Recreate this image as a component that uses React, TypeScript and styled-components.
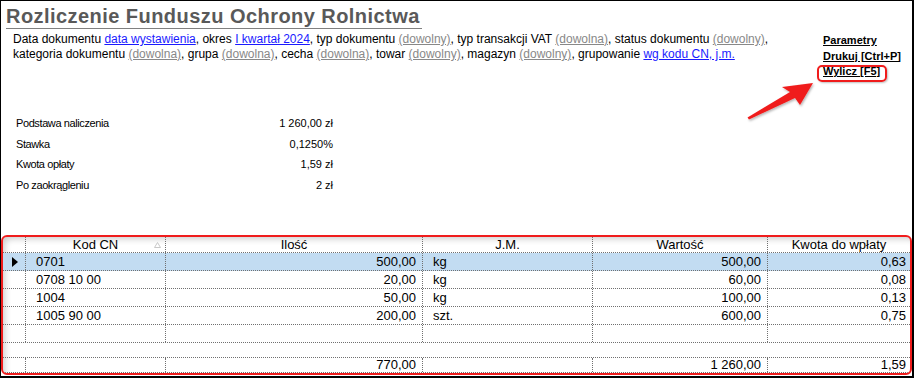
import { Fragment } from "react";
import styled, { createGlobalStyle } from "styled-components";

const GlobalStyle = createGlobalStyle`
  html, body {
    margin: 0;
    padding: 0;
    background: #fff;
  }
  body {
    font-family: "Liberation Sans", Arial, sans-serif;
    color: #000;
  }
`;

const Frame = styled.div`
  position: relative;
  box-sizing: border-box;
  width: 914px;
  height: 378px;
  border-top: 1px solid #000;
  border-left: 1px solid #000;
  border-right: 2px solid #000;
  border-bottom: 2px solid #000;
  display: flex;
  flex-direction: column;
  background: #fff;
`;

const Top = styled.div`
  display: grid;
  grid-template-columns: 1fr 89px;
  height: 112px;
`;

const Intro = styled.div`
  display: flex;
  flex-direction: column;
  align-items: flex-start;
`;

const Title = styled.h1`
  margin: 4px 0 0 5px;
  font-size: 20px;
  line-height: 23px;
  letter-spacing: 0.45px;
  font-weight: bold;
  color: #595959;
  border-bottom: 1px solid #808080;
  padding-right: 2px;
`;

const Description = styled.p`
  margin: 3px 0 0;
  padding-left: 12px;
  font-size: 12px;
  line-height: 15px;
  white-space: nowrap;
`;

interface ParamProps {
  $free?: boolean;
}

const Param = styled.span<ParamProps>`
  color: ${(p) => (p.$free ? "#888" : "#1a1aff")};
  text-decoration: underline;
  cursor: pointer;
`;

const Actions = styled.div`
  padding-top: 32px;
  display: flex;
  flex-direction: column;
  align-items: flex-start;
`;

interface ActionProps {
  $marked?: boolean;
}

const Action = styled.a<ActionProps>`
  position: relative;
  display: inline-block;
  font-size: 11px;
  line-height: 15.5px;
  font-weight: bold;
  color: #000;
  text-decoration: underline;
  cursor: pointer;

  ${(p) =>
    p.$marked &&
    `
    &::after {
      content: "";
      position: absolute;
      left: -6px;
      top: 1px;
      width: 70px;
      height: 17px;
      box-sizing: border-box;
      border: 2px solid #f01c1c;
      border-radius: 5px;
      box-shadow: 1px 1px 2px rgba(0, 0, 0, 0.25);
    }
  `}
`;

const Arrow = styled.svg`
  position: absolute;
  left: 739px;
  top: 75px;
  overflow: visible;
`;

const Summary = styled.div`
  display: grid;
  grid-template-columns: 1fr auto;
  grid-auto-rows: 20.5px;
  width: 317px;
  margin-left: 15px;
  font-size: 11px;
  line-height: 20.5px;
  letter-spacing: -0.4px;
`;

const SummaryValue = styled.span`
  text-align: right;
  letter-spacing: 0;
`;

const Spacer = styled.div`
  flex: 1;
`;

const Panel = styled.div`
  margin-bottom: 1px;
  height: 140px;
  box-sizing: border-box;
  border: 2px solid #f01c1c;
  border-radius: 6px;
  box-shadow: inset 4px 4px 6px -2px rgba(0, 0, 0, 0.2);
  overflow: hidden;
  font-size: 13px;
`;

const columns = "23px 140px 257px 170px 175px 1fr";

interface RowProps {
  $selected?: boolean;
  $height: number;
}

const Row = styled.div<RowProps>`
  display: grid;
  grid-template-columns: ${columns};
  box-sizing: border-box;
  height: ${(p) => p.$height}px;
  line-height: ${(p) => p.$height - 1}px;
  border-bottom: 1px dotted #707070;
  background: ${(p) => (p.$selected ? "#c2dcf2" : "transparent")};
`;

const Gap = styled.div`
  height: 15px;
  box-sizing: border-box;
  border-bottom: 1px dotted #707070;
`;

interface CellProps {
  $align?: "left" | "right" | "center";
}

const Cell = styled.div<CellProps>`
  position: relative;
  border-right: 1px dotted #707070;
  text-align: ${(p) => p.$align || "left"};
  padding: ${(p) => (p.$align === "right" ? "0 6px 0 0" : p.$align === "center" ? "0" : "0 0 0 10px")};
  white-space: nowrap;
  overflow: hidden;

  &:last-child {
    border-right: none;
    padding-right: ${(p) => (p.$align === "right" ? "4px" : "0")};
  }
`;

const Indicator = styled.div`
  border-right: 1px dotted #707070;
  display: flex;
  align-items: center;
  padding-left: 9px;
`;

const SortMark = styled.svg`
  position: absolute;
  right: 4px;
  top: 5px;
`;

type Line = {
  code: string;
  qty: string;
  unit: string;
  value: string;
  fee: string;
};

const lines: Line[] = [
  { code: "0701", qty: "500,00", unit: "kg", value: "500,00", fee: "0,63" },
  { code: "0708 10 00", qty: "20,00", unit: "kg", value: "60,00", fee: "0,08" },
  { code: "1004", qty: "50,00", unit: "kg", value: "100,00", fee: "0,13" },
  { code: "1005 90 00", qty: "200,00", unit: "szt.", value: "600,00", fee: "0,75" },
  { code: "", qty: "", unit: "", value: "", fee: "" },
];

const totals = [
  ["Podstawa naliczenia", "1 260,00 zł"],
  ["Stawka", "0,1250%"],
  ["Kwota opłaty", "1,59 zł"],
  ["Po zaokrągleniu", "2 zł"],
];

export default function App() {
  return (
    <>
      <GlobalStyle />
      <Frame>
        <Top>
          <Intro>
            <Title>Rozliczenie Funduszu Ochrony Rolnictwa</Title>
            <Description>
              Data dokumentu <Param>data wystawienia</Param>, okres{" "}
              <Param>I kwartał 2024</Param>, typ dokumentu <Param $free>(dowolny)</Param>, typ
              transakcji VAT <Param $free>(dowolna)</Param>, status dokumentu{" "}
              <Param $free>(dowolny)</Param>,
              <br />
              kategoria dokumentu <Param $free>(dowolna)</Param>, grupa{" "}
              <Param $free>(dowolna)</Param>, cecha <Param $free>(dowolna)</Param>, towar{" "}
              <Param $free>(dowolny)</Param>, magazyn <Param $free>(dowolny)</Param>, grupowanie{" "}
              <Param>wg kodu CN, j.m.</Param>
            </Description>
          </Intro>
          <Actions>
            <Action>Parametry</Action>
            <Action>Drukuj [Ctrl+P]</Action>
            <Action $marked>Wylicz [F5]</Action>
          </Actions>
        </Top>

        <Summary>
          {totals.map(([label, value]) => (
            <Fragment key={label}>
              <span>{label}</span>
              <SummaryValue>{value}</SummaryValue>
            </Fragment>
          ))}
        </Summary>

        <Spacer />

        <Panel>
          <Row $height={16}>
            <Indicator />
            <Cell $align="center">
              Kod CN
              <SortMark width="7" height="6" viewBox="0 0 7 6">
                <polygon points="3.5,0.5 6.5,5.5 0.5,5.5" fill="none" stroke="#c8c8c8" strokeWidth="1" />
              </SortMark>
            </Cell>
            <Cell $align="center">Ilość</Cell>
            <Cell $align="center">J.M.</Cell>
            <Cell $align="center">Wartość</Cell>
            <Cell $align="center">Kwota do wpłaty</Cell>
          </Row>
          {lines.map((line, i) => (
            <Row key={i} $height={18} $selected={i === 0}>
              <Indicator>
                {i === 0 && (
                  <svg width="6" height="10" viewBox="0 0 6 10">
                    <polygon points="0,0 6,5 0,10" fill="#000" />
                  </svg>
                )}
              </Indicator>
              <Cell>{line.code}</Cell>
              <Cell $align="right">{line.qty}</Cell>
              <Cell>{line.unit}</Cell>
              <Cell $align="right">{line.value}</Cell>
              <Cell $align="right">{line.fee}</Cell>
            </Row>
          ))}
          <Gap />
          <Row $height={15}>
            <Indicator />
            <Cell />
            <Cell $align="right">770,00</Cell>
            <Cell />
            <Cell $align="right">1 260,00</Cell>
            <Cell $align="right">1,59</Cell>
          </Row>
        </Panel>

        <Arrow width="80" height="50" viewBox="0 0 80 50">
          <defs>
            <filter id="arrowShadow" x="-20%" y="-20%" width="140%" height="140%">
              <feDropShadow dx="1" dy="1.5" stdDeviation="1" floodColor="#000" floodOpacity="0.3" />
            </filter>
          </defs>
          <polygon
            points="73,7 60,29 55,22 9,43.5 7.5,41.5 50,16 42,11"
            fill="#f01c1c"
            filter="url(#arrowShadow)"
          />
        </Arrow>
      </Frame>
    </>
  );
}
